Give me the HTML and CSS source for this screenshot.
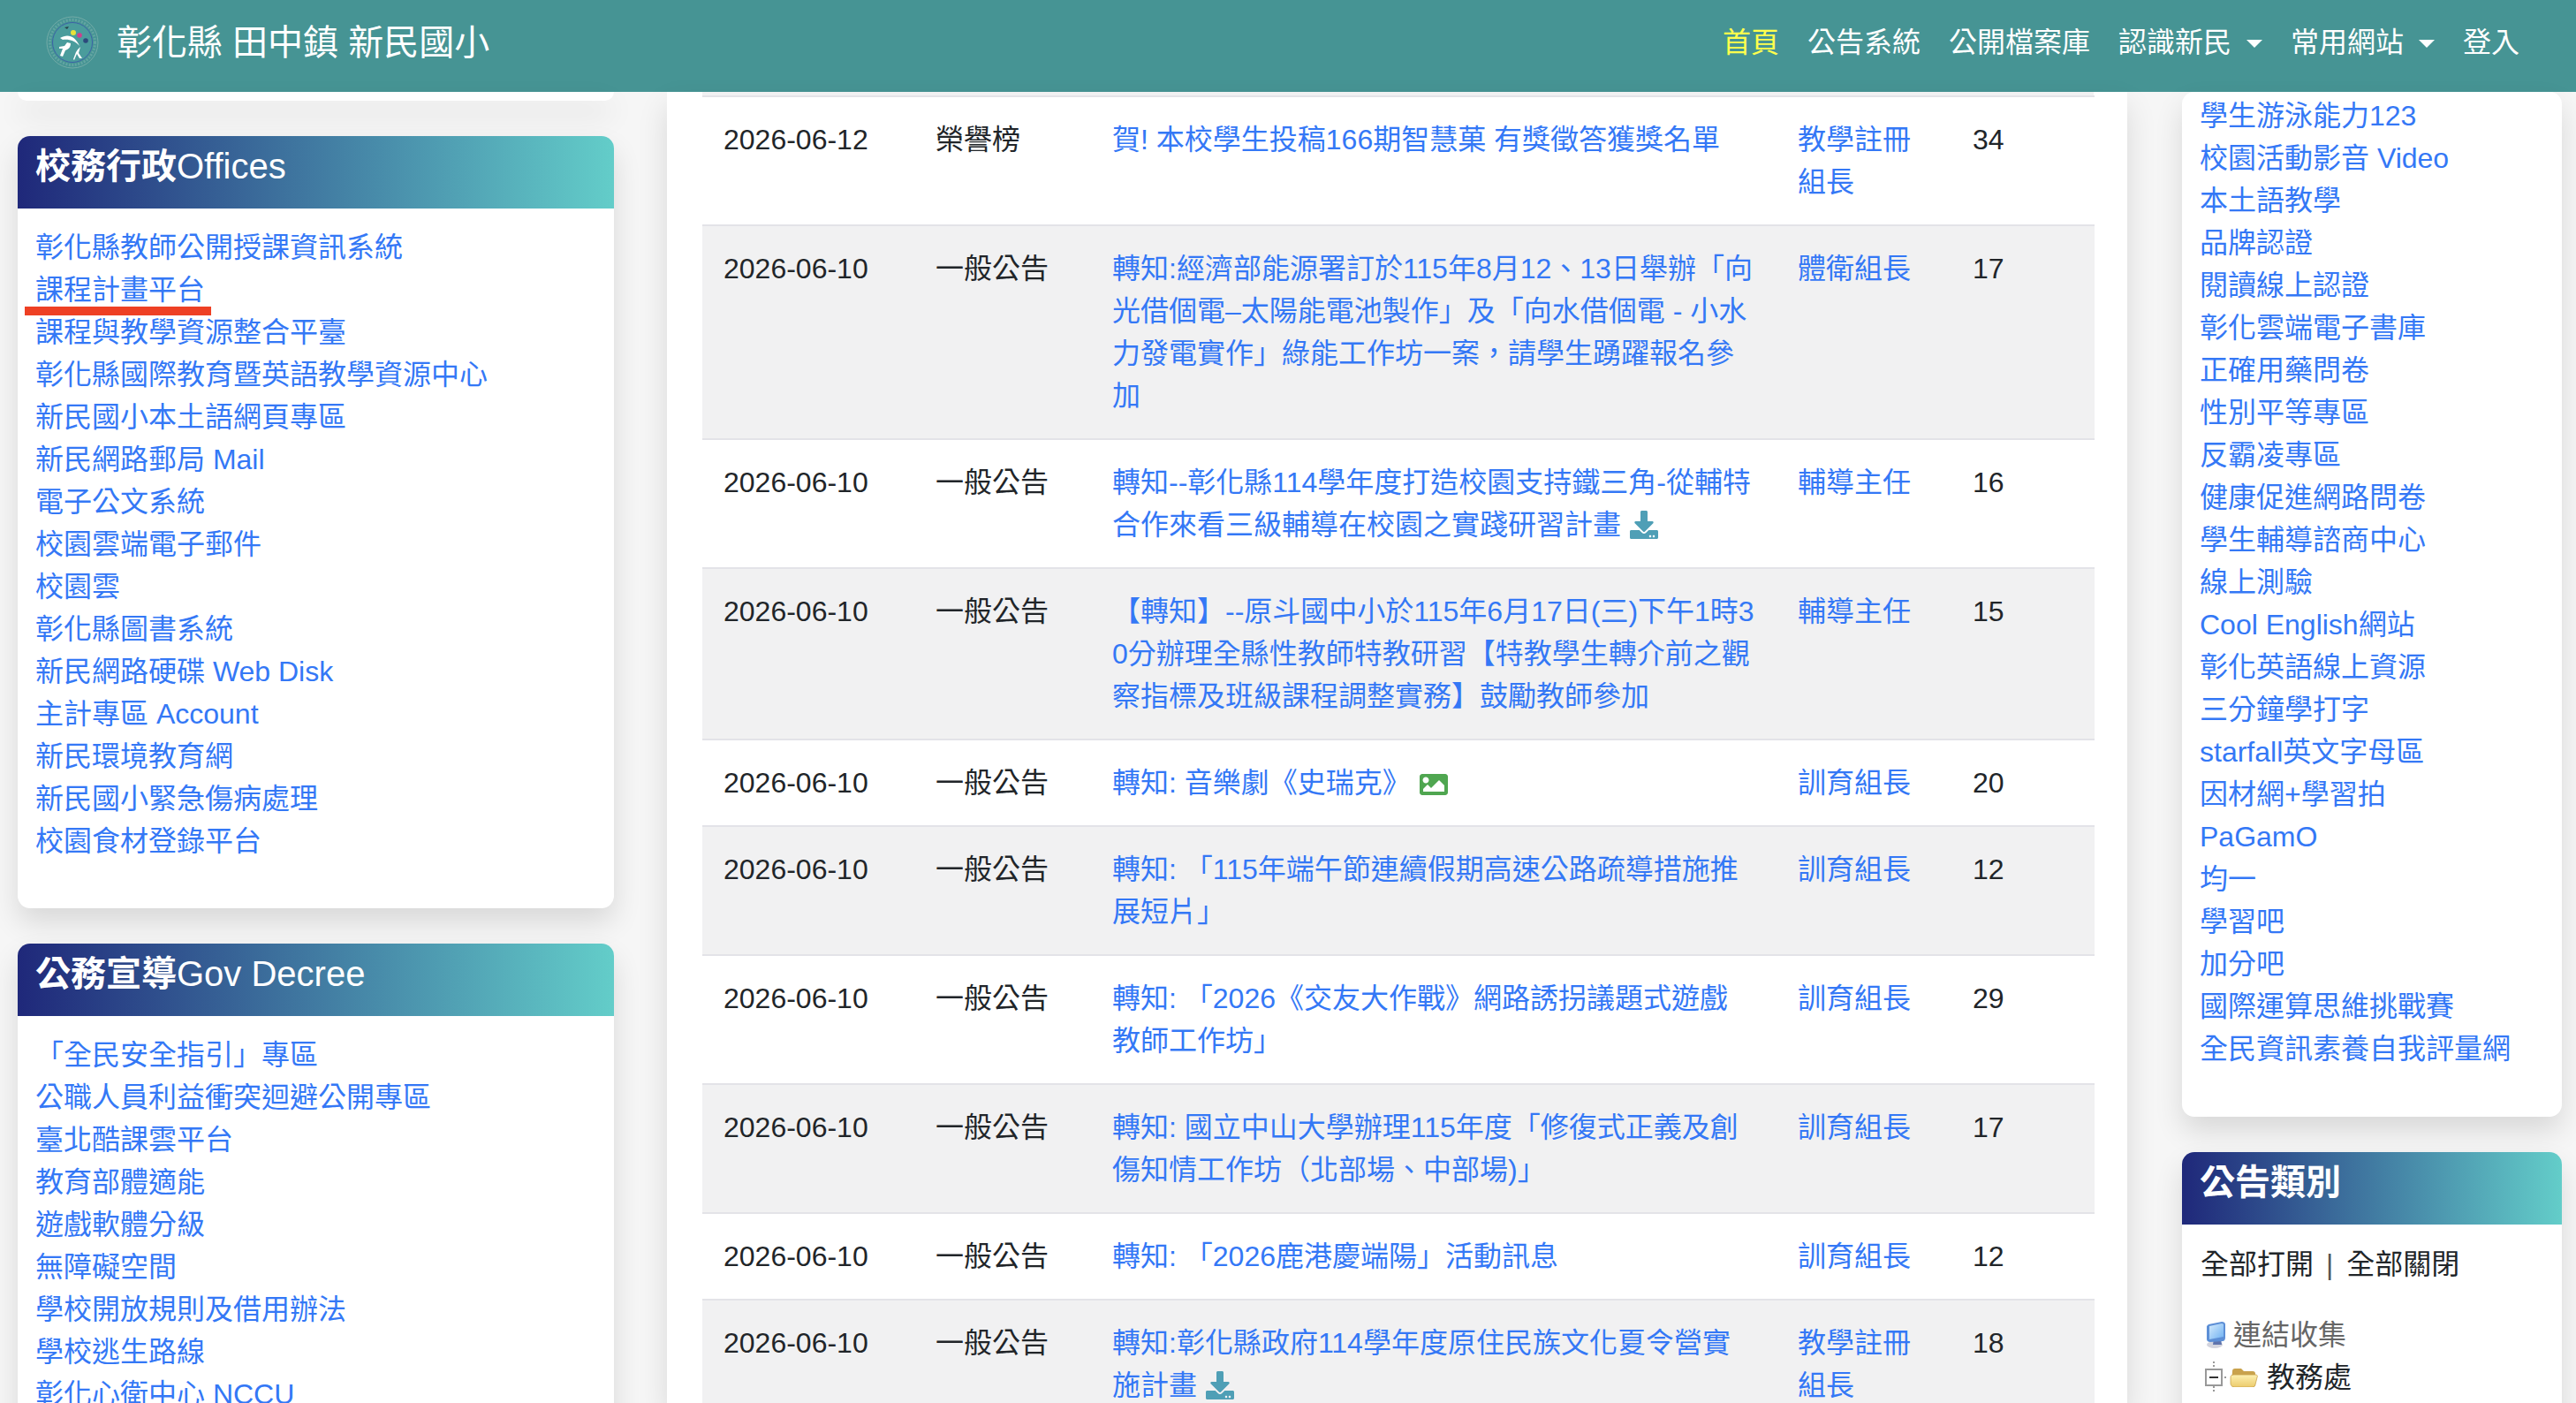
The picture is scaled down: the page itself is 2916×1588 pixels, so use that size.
FILE: index.html
```html
<!DOCTYPE html>
<html lang="zh-Hant">

<head>
    <meta charset="UTF-8">
    <meta name="viewport" content="width=device-width, initial-scale=1.0">
    <title>彰化縣 田中鎮 新民國小</title>
    <link rel="stylesheet" href="styles.css">
</head>

<body>
    <svg class="defs" width="0" height="0">
        <defs>
            <linearGradient id="g-folder" x1="0" y1="0" x2="0" y2="1">
                <stop offset="0" stop-color="#fdf0b0" />
                <stop offset="1" stop-color="#eccb6c" />
            </linearGradient>
            <linearGradient id="g-screen" x1="0" y1="0" x2="1" y2="1">
                <stop offset="0" stop-color="#d5ebfc" />
                <stop offset="1" stop-color="#6fb1f2" />
            </linearGradient>
        </defs>
        <symbol id="i-download" viewBox="0 0 512 512">
            <path d="M216 0h80c13.3 0 24 10.7 24 24v168h87.7c17.8 0 26.7 21.5 14.1 34.1L269.7 378.3c-7.5 7.5-19.8 7.5-27.3 0L90.1 226.1c-12.6-12.6-3.7-34.1 14.1-34.1H192V24c0-13.3 10.7-24 24-24zm296 376v112c0 13.3-10.7 24-24 24H24c-13.3 0-24-10.7-24-24V376c0-13.3 10.7-24 24-24h146.7l49 49c20.1 20.1 52.5 20.1 72.6 0l49-49H488c13.3 0 24 10.7 24 24zm-124 88c0-11-9-20-20-20s-20 9-20 20 9 20 20 20 20-9 20-20zm64 0c0-11-9-20-20-20s-20 9-20 20 9 20 20 20 20-9 20-20z" />
        </symbol>
        <symbol id="i-image" viewBox="0 64 512 384">
            <path d="M464 448H48c-26.51 0-48-21.49-48-48V112c0-26.51 21.49-48 48-48h416c26.51 0 48 21.49 48 48v288c0 26.51-21.49 48-48 48zM112 120c-30.928 0-56 25.072-56 56s25.072 56 56 56 56-25.072 56-56-25.072-56-56-56zM64 384h384V272l-87.515-87.515c-4.686-4.686-12.284-4.686-16.971 0L208 320l-55.515-55.515c-4.686-4.686-12.284-4.686-16.971 0L64 336v48z" />
        </symbol>
    </svg>

    <nav class="navbar">
        <a class="brand" href="#">
            <svg class="logo" viewBox="0 0 60 60">
                <circle cx="30" cy="30" r="29" fill="none" stroke="#74aca8" stroke-width="1" />
                <circle cx="30" cy="30" r="25.5" fill="none" stroke="#63a5a2" stroke-width="3" stroke-dasharray="2 1.5" />
                <circle cx="30" cy="30" r="22.5" fill="#4a9c9c" stroke="#3d62a8" stroke-width="1" />
                <path d="M16 25c8-5 17-3 22 9-5-6-12-8-19-7z" fill="#fff" />
                <path d="M24 30l4 1c0 5-3 7-6 8l-3 7-3-1 3-8-4 0 0-2 6-1z" fill="#fff" />
                <path d="M36 38l3-3-2 7 4 6-3 0-3-5-3 7-1-1 3-8z" fill="#fff" />
                <circle cx="31" cy="19" r="3" fill="#e8e23a" />
                <circle cx="38" cy="22" r="2.8" fill="#cf3f8e" />
                <circle cx="45" cy="28" r="2.8" fill="#2c4a7c" />
                <path d="M21 13l5 -1-2 3z" fill="#26404a" />
            </svg>
            <span>彰化縣 田中鎮 新民國小</span>
        </a>
        <ul class="nav-links">
            <li><a class="active" href="#">首頁</a></li>
            <li><a href="#">公告系統</a></li>
            <li><a href="#">公開檔案庫</a></li>
            <li><a class="dropdown" href="#">認識新民</a></li>
            <li><a class="dropdown" href="#">常用網站</a></li>
            <li><a href="#">登入</a></li>
        </ul>
    </nav>

    <div class="page">
        <aside class="col-left">
            <div class="card card-cut"></div>

            <section class="card">
                <h5 class="card-title">校務行政<span>Offices</span></h5>
                <ul class="links">
                    <li><a href="#">彰化縣教師公開授課資訊系統</a></li>
                    <li class="marked"><a href="#">課程計畫平台</a></li>
                    <li><a href="#">課程與教學資源整合平臺</a></li>
                    <li><a href="#">彰化縣國際教育暨英語教學資源中心</a></li>
                    <li><a href="#">新民國小本土語網頁專區</a></li>
                    <li><a href="#">新民網路郵局 Mail</a></li>
                    <li><a href="#">電子公文系統</a></li>
                    <li><a href="#">校園雲端電子郵件</a></li>
                    <li><a href="#">校園雲</a></li>
                    <li><a href="#">彰化縣圖書系統</a></li>
                    <li><a href="#">新民網路硬碟 Web Disk</a></li>
                    <li><a href="#">主計專區 Account</a></li>
                    <li><a href="#">新民環境教育網</a></li>
                    <li><a href="#">新民國小緊急傷病處理</a></li>
                    <li><a href="#">校園食材登錄平台</a></li>
                </ul>
            </section>

            <section class="card">
                <h5 class="card-title">公務宣導<span>Gov Decree</span></h5>
                <ul class="links">
                    <li><a href="#">「全民安全指引」專區</a></li>
                    <li><a href="#">公職人員利益衝突迴避公開專區</a></li>
                    <li><a href="#">臺北酷課雲平台</a></li>
                    <li><a href="#">教育部體適能</a></li>
                    <li><a href="#">遊戲軟體分級</a></li>
                    <li><a href="#">無障礙空間</a></li>
                    <li><a href="#">學校開放規則及借用辦法</a></li>
                    <li><a href="#">學校逃生路線</a></li>
                    <li><a href="#">彰化心衛中心 NCCU</a></li>
                </ul>
            </section>
        </aside>

        <main class="col-main">
            <div class="table-cut"></div>
            <table class="news">
                <colgroup>
                    <col class="c-date">
                    <col class="c-type">
                    <col class="c-title">
                    <col class="c-unit">
                    <col class="c-hits">
                </colgroup>
                <tbody>
                    <tr>
                        <td>2026-06-12</td>
                        <td>榮譽榜</td>
                        <td><a href="#">賀! 本校學生投稿166期智慧菓 有獎徵答獲獎名單</a></td>
                        <td><a href="#">教學註冊組長</a></td>
                        <td>34</td>
                    </tr>
                    <tr>
                        <td>2026-06-10</td>
                        <td>一般公告</td>
                        <td><a href="#">轉知:經濟部能源署訂於115年8月12、13日舉辦「向光借個電–太陽能電池製作」及「向水借個電 - 小水力發電實作」綠能工作坊一案，請學生踴躍報名參加</a></td>
                        <td><a href="#">體衛組長</a></td>
                        <td>17</td>
                    </tr>
                    <tr>
                        <td>2026-06-10</td>
                        <td>一般公告</td>
                        <td><a href="#">轉知--彰化縣114學年度打造校園支持鐵三角-從輔特合作來看三級輔導在校園之實踐研習計畫</a> <svg class="icon icon-dl"><use href="#i-download" /></svg></td>
                        <td><a href="#">輔導主任</a></td>
                        <td>16</td>
                    </tr>
                    <tr>
                        <td>2026-06-10</td>
                        <td>一般公告</td>
                        <td><a href="#">【轉知】--原斗國中小於115年6月17日(三)下午1時30分辦理全縣性教師特教研習【特教學生轉介前之觀察指標及班級課程調整實務】鼓勵教師參加</a></td>
                        <td><a href="#">輔導主任</a></td>
                        <td>15</td>
                    </tr>
                    <tr>
                        <td>2026-06-10</td>
                        <td>一般公告</td>
                        <td><a href="#">轉知: 音樂劇《史瑞克》</a> <svg class="icon icon-img"><use href="#i-image" /></svg></td>
                        <td><a href="#">訓育組長</a></td>
                        <td>20</td>
                    </tr>
                    <tr>
                        <td>2026-06-10</td>
                        <td>一般公告</td>
                        <td><a href="#">轉知: 「115年端午節連續假期高速公路疏導措施推展短片」</a></td>
                        <td><a href="#">訓育組長</a></td>
                        <td>12</td>
                    </tr>
                    <tr>
                        <td>2026-06-10</td>
                        <td>一般公告</td>
                        <td><a href="#">轉知: 「2026《交友大作戰》網路誘拐議題式遊戲教師工作坊」</a></td>
                        <td><a href="#">訓育組長</a></td>
                        <td>29</td>
                    </tr>
                    <tr>
                        <td>2026-06-10</td>
                        <td>一般公告</td>
                        <td><a href="#">轉知: 國立中山大學辦理115年度「修復式正義及創傷知情工作坊（北部場、中部場)」</a></td>
                        <td><a href="#">訓育組長</a></td>
                        <td>17</td>
                    </tr>
                    <tr>
                        <td>2026-06-10</td>
                        <td>一般公告</td>
                        <td><a href="#">轉知: 「2026鹿港慶端陽」活動訊息</a></td>
                        <td><a href="#">訓育組長</a></td>
                        <td>12</td>
                    </tr>
                    <tr>
                        <td>2026-06-10</td>
                        <td>一般公告</td>
                        <td><a href="#">轉知:彰化縣政府114學年度原住民族文化夏令營實施計畫</a> <svg class="icon icon-dl"><use href="#i-download" /></svg></td>
                        <td><a href="#">教學註冊組長</a></td>
                        <td>18</td>
                    </tr>
                </tbody>
            </table>
        </main>

        <aside class="col-right">
            <section class="card">
                <ul class="links links-top">
                    <li><a href="#">學生游泳能力123</a></li>
                    <li><a href="#">校園活動影音 Video</a></li>
                    <li><a href="#">本土語教學</a></li>
                    <li><a href="#">品牌認證</a></li>
                    <li><a href="#">閱讀線上認證</a></li>
                    <li><a href="#">彰化雲端電子書庫</a></li>
                    <li><a href="#">正確用藥問卷</a></li>
                    <li><a href="#">性別平等專區</a></li>
                    <li><a href="#">反霸凌專區</a></li>
                    <li><a href="#">健康促進網路問卷</a></li>
                    <li><a href="#">學生輔導諮商中心</a></li>
                    <li><a href="#">線上測驗</a></li>
                    <li><a href="#">Cool English網站</a></li>
                    <li><a href="#">彰化英語線上資源</a></li>
                    <li><a href="#">三分鐘學打字</a></li>
                    <li><a href="#">starfall英文字母區</a></li>
                    <li><a href="#">因材網+學習拍</a></li>
                    <li><a href="#">PaGamO</a></li>
                    <li><a href="#">均一</a></li>
                    <li><a href="#">學習吧</a></li>
                    <li><a href="#">加分吧</a></li>
                    <li><a href="#">國際運算思維挑戰賽</a></li>
                    <li><a href="#">全民資訊素養自我評量網</a></li>
                </ul>
            </section>

            <section class="card">
                <h5 class="card-title">公告類別</h5>
                <div class="tree">
                    <p class="tree-actions">全部打開<span class="sep">|</span>全部關閉</p>
                    <div class="tree-row tree-root">
                        <svg class="tree-pc" viewBox="0 0 22 30">
                            <ellipse cx="10" cy="26" rx="9" ry="4" fill="#d3d4de" />
                            <path d="M9 19h8l1 7H8z" fill="#5f74ad" />
                            <path d="M3 3l15-3c2 0 4 1 4 3v15c0 2-1 4-3 4L5 23c-2 0-4-1-4-3V5z" fill="#5d8fd6" />
                            <path d="M4 5l14-3c1 0 2 1 2 1v14L4 20z" fill="url(#g-screen)" />
                        </svg>
                        <span>連結收集</span>
                    </div>
                    <div class="tree-row tree-folder">
                        <svg class="tree-line" viewBox="0 0 24 36">
                            <path d="M10 0v8M10 28v8M18 18h6" fill="none" stroke="#999" stroke-width="2" stroke-dasharray="2 2" />
                            <rect x="1" y="9" width="18" height="18" fill="#fff" stroke="#999" stroke-width="2" />
                            <path d="M5 18h10" stroke="#333" stroke-width="2" />
                        </svg>
                        <svg class="tree-dir" viewBox="0 0 32 22">
                            <path d="M3 4c0-2 1-3 3-3h7l3 3h10c2 0 3 1 3 3v12c0 2-1 3-3 3H5c-2 0-3-1-3-3z" fill="#c9a24c" />
                            <path d="M1 11c0-2 1-3 4-3h24c2 0 3 1 2 3l-2 8c0 2-2 3-4 3H5c-2 0-4-2-4-4z" fill="url(#g-folder)" stroke="#c9a24c" stroke-width=".8" />
                        </svg>
                        <span>教務處</span>
                    </div>
                </div>
            </section>
        </aside>
    </div>
</body>

</html>
```

FILE: styles.css
```css
html,
body {
    height: 100%;
}

body {
    margin: 0;
    overflow: hidden;
    background: #f6f6f6;
    color: #212529;
    font: 32px/48px "Liberation Sans", "Noto Sans CJK TC", sans-serif;
}

ul {
    margin: 0;
    padding: 0;
    list-style: none;
}

a {
    color: #3478f6;
    text-decoration: none;
}

.defs {
    position: absolute;
}

/* top bar */
.navbar {
    display: flex;
    justify-content: space-between;
    align-items: center;
    box-sizing: border-box;
    height: 104px;
    padding: 0 48px 8px 52px;
    background: #469494;
}

.brand {
    display: flex;
    align-items: center;
    gap: 20px;
    color: #fff;
    font-size: 40px;
}

.logo {
    width: 60px;
    height: 60px;
}

.nav-links {
    display: flex;
}

.nav-links a {
    display: block;
    padding: 0 16px;
    color: #fff;
}

.nav-links a.active {
    color: #ffff4d;
}

.nav-links a.dropdown::after {
    content: "";
    display: inline-block;
    margin-left: 17px;
    vertical-align: 5px;
    border-top: 9.6px solid #fff;
    border-left: 9.6px solid transparent;
    border-right: 9.6px solid transparent;
}

/* columns */
.page {
    display: flex;
    align-items: flex-start;
    padding-left: 20px;
}

.col-left {
    flex: 0 0 675px;
}

.col-main {
    flex: 0 0 1575px;
    height: 1484px;
    margin: 0 62px 0 60px;
    padding: 0 38px 0 40px;
    background: #fff;
    box-shadow: 0 16px 32px rgba(0, 0, 0, .12);
    overflow: hidden;
}

.col-right {
    flex: 0 0 430px;
}

/* cards */
.card {
    margin-bottom: 40px;
    padding-bottom: 52px;
    background: #fff;
    border-radius: 14px;
    box-shadow: 0 16px 32px rgba(0, 0, 0, .12);
}

.card-cut {
    height: 10px;
    padding: 0;
    border-radius: 0 0 14px 14px;
}

.card-title {
    height: 72px;
    margin: 0;
    padding: 10px 20px 0;
    background: linear-gradient(90deg, #1f287a, #63cdc9);
    border-radius: 14px 14px 0 0;
    color: #fff;
    font-size: 40px;
    font-weight: 700;
    line-height: 48px;
}

.card-title span {
    font-weight: 400;
}

.links {
    padding: 20px 20px 0;
}

.links-top {
    padding-top: 3px;
    padding-bottom: 1px;
}

.marked {
    position: relative;
}

.marked::after {
    content: "";
    position: absolute;
    left: -12px;
    top: 43px;
    width: 211px;
    height: 10px;
    background: #ee4024;
}

/* news table */
.table-cut {
    height: 4px;
    background: #f1f1f2;
}

.news {
    width: 1576px;
    border-collapse: collapse;
    table-layout: fixed;
    border-top: 2px solid #e3e3e8;
}

.c-date {
    width: 242px;
}

.c-type {
    width: 200px;
}

.c-title {
    width: 774px;
}

.c-unit {
    width: 200px;
}

.c-hits {
    width: 160px;
}

.news td {
    padding: 24px;
    border-bottom: 2px solid #e3e3e8;
    vertical-align: top;
    word-break: break-all;
}

.news td:nth-child(2),
.news td:nth-child(3),
.news td:nth-child(5) {
    padding-left: 22px;
}

.news tr:nth-child(even) {
    background: #f1f1f2;
}

.icon {
    display: inline-block;
}

.icon-dl {
    width: 32px;
    height: 32px;
    vertical-align: -5px;
    margin-left: 1px;
    fill: #4f9fb6;
}

.icon-img {
    width: 32px;
    height: 24px;
    vertical-align: -3px;
    margin-left: 1px;
    fill: #4fa650;
}

/* category tree */
.tree {
    padding: 21px 21px 0;
}

.tree-actions {
    margin: 0 0 32px;
}

.sep {
    margin: 0 15px 0 14px;
    color: #555;
}

.tree-row {
    display: flex;
    align-items: center;
    height: 48px;
}

.tree-root {
    color: #666;
}

.tree-pc {
    width: 22px;
    height: 30px;
    margin: 0 9px 0 6px;
}

.tree-line {
    width: 24px;
    height: 36px;
    margin-left: 5px;
}

.tree-dir {
    width: 32px;
    height: 22px;
    margin: 0 10px 0 4px;
}
```
